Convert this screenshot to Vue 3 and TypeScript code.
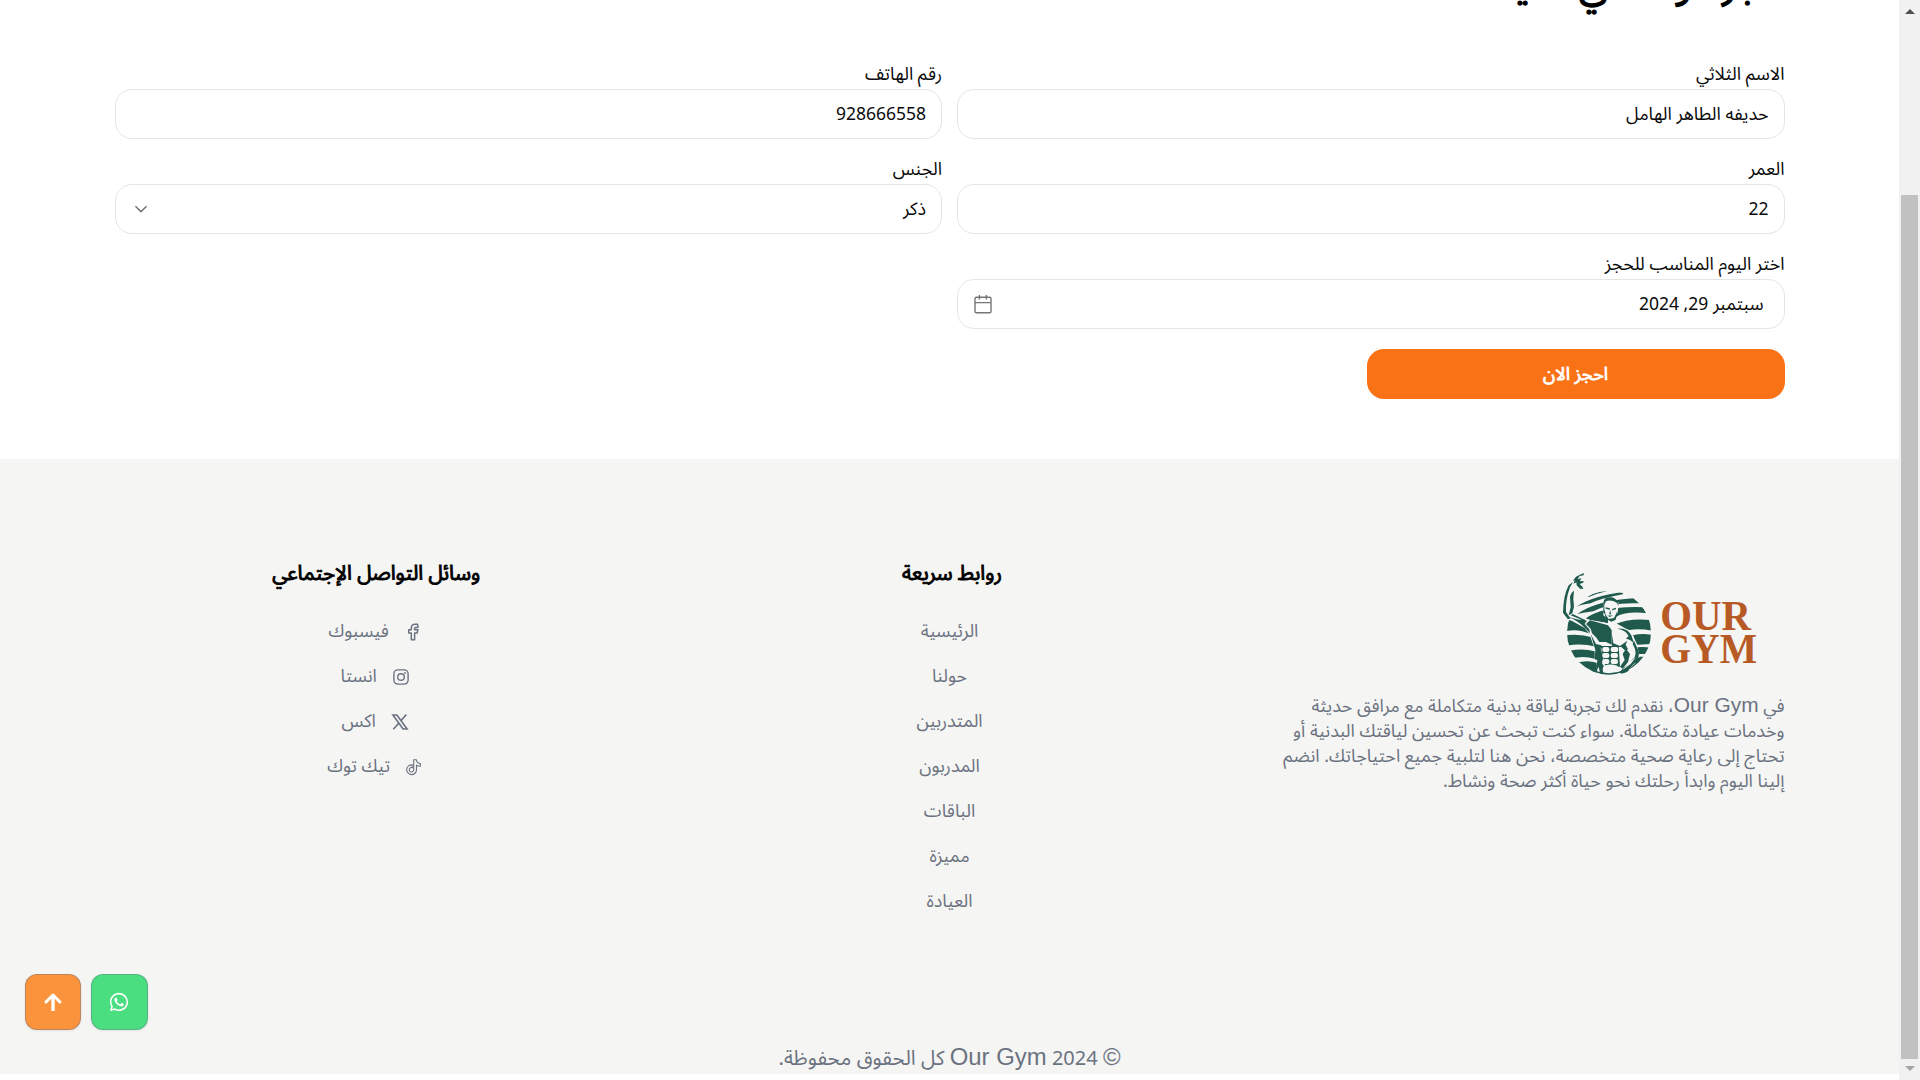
<script setup lang="ts">
interface Social {
  label: string
  icon: 'facebook' | 'instagram' | 'x' | 'tiktok'
}

const links: string[] = ['الرئيسية', 'حولنا', 'المتدربين', 'المدربون', 'الباقات', 'مميزة', 'العيادة']
const socials: Social[] = [
  { label: 'فيسبوك', icon: 'facebook' },
  { label: 'انستا', icon: 'instagram' },
  { label: 'اكس', icon: 'x' },
  { label: 'تيك توك', icon: 'tiktok' },
]
</script>

<template>
  <div class="screen">
    <div class="page" dir="rtl">
      <main class="booking">
        <h1 class="title">حجز موعد في العيادة</h1>
        <form class="form" @submit.prevent>
          <label class="field">
            <span class="label">الاسم الثلاثي</span>
            <span class="control">حديفه الطاهر الهامل</span>
          </label>
          <label class="field">
            <span class="label">رقم الهاتف</span>
            <span class="control"><span class="num">928666558</span></span>
          </label>
          <label class="field">
            <span class="label">العمر</span>
            <span class="control"><span class="num">22</span></span>
          </label>
          <label class="field">
            <span class="label">الجنس</span>
            <span class="control">
              ذكر
              <svg width="20" height="20" viewBox="0 0 20 20" fill="none" stroke="#757575" stroke-width="1.5">
                <path d="M4.400 7.200L10 12.600L15.600 7.200" />
              </svg>
            </span>
          </label>
          <label class="field">
            <span class="label">اختر اليوم المناسب للحجز</span>
            <span class="control date">
              <span>سبتمبر <span class="num">29, 2024</span></span>
              <svg width="20" height="20" viewBox="0 0 20 20" fill="none" stroke="#757575" stroke-width="1.4">
                <rect x="2" y="3.2" width="16" height="15.6" rx="1.4" />
                <path d="M2 8.6h16M6.4 1v4.6M13.4 1v4.6" />
              </svg>
            </span>
          </label>
        </form>
        <button class="submit" type="button">احجز الان</button>
      </main>

      <footer class="footer">
        <div class="columns">
          <section class="about">
            <svg class="logo" width="240" height="140" viewBox="0 0 720 420">
              <defs>
                <clipPath id="disc"><circle cx="207" cy="248" r="126" /></clipPath>
              </defs>
              <g clip-path="url(#disc)" fill="#1f5a4d">
                <path d="M142 140Q170 124 202 123Q172 130 146 141Z" />
                <path d="M108 171Q160 136 252 126L248 133Q180 146 152 160Q124 164 108 171Z" />
                <path d="M112 192Q170 150 292 144L300 160Q210 156 160 184Q134 188 112 192Z" />
                <path d="M136 206Q190 166 316 172L324 190Q262 182 228 200L222 222L204 220L150 210Z" />
                <path d="M222 224Q270 202 340 211V243Q300 234 268 240Q244 232 222 228Z" />
                <path d="M76 212Q110 204 140 236L152 252Q112 234 76 244Z" />
                <path d="M76 256Q120 250 156 262L168 290Q120 278 78 288Z" />
                <path d="M278 256Q310 248 340 256V282L292 284Z" />
                <path d="M88 302Q130 294 164 304V326Q130 316 92 326Z" />
                <path d="M292 292Q315 290 340 294V312H296Z" />
                <path d="M106 340Q140 328 170 338L172 376Q150 360 122 360Z" />
                <path d="M236 366L300 320H330L300 350L240 380Z" />
              </g>
              <path fill="#f5f5f4" d="M190 160Q210 138 236 158L233 190L224 204L226 218L258 236Q282 246 284 274L297 306L286 340L246 374H176L164 296L148 252L134 234L84 206L76 176L90 104L110 82L104 130L98 190L150 210L204 220V208L190 196Z" />
              <g fill="#1f5a4d">
                <path d="M131 69L108 80L98 93L104 90L101 101L109 97L110 106L120 116L130 117L127 110L119 102L129 98L132 94L119 93L125 84L113 88L119 78L131 76Z" />
                <path d="M99 96L86 106Q70 136 69 188L83 207L92 206L78 186Q76 150 90 112Z" />
                <path d="M102 122Q92 128 90 142L92 172L86 196L97 190L102 170Q98 146 102 122Z" />
                <path d="M84 200Q114 212 135 234L150 250L148 238L134 222L140 212L98 192L92 196L126 210Q110 208 84 200Z" />
                <path d="M150 211L204 226L215 240V284L198 276L178 276L168 262L156 250L152 236L138 222Z" />
                <path d="M190 158Q192 140 215 142Q234 146 236 168L230 158Q212 148 198 154L193 164V178L197 192L190 188Z" />
                <path d="M197 172l13 3v4l-13-3zM216 177l12-4v5l-12 3zM211 180l2 13h-6zM202 197l16-1l-8 5zM193 188L206 207L222 204L232 184L233 192L226 210L214 215L198 206Z" />
                <path d="M232 236Q262 232 274 256L282 280Q272 268 258 266L266 258Q258 240 232 236Z" />
                <path d="M215 248L220 280L240 288L262 272L257 284L264 298L256 302L244 291L216 290Z" />
                <path d="M152 252L168 282L184 286L182 296L190 322L186 340L194 352L190 372L180 370L176 350L168 366L172 330L164 328L166 300Z" />
                <path d="M282 272L297 306L294 334Q276 342 264 364Q250 374 236 368L262 344L284 322Q292 306 278 282Z" />
                <path d="M258 296L270 312L264 336L248 356L240 350L254 330L248 312Z" />
                <path d="M182 288H236L240 350L196 350Z" />
              </g>
              <g fill="#f5f5f4">
                <rect x="187" y="291" width="21" height="15" rx="6" /><rect x="212" y="291" width="23" height="15" rx="6" />
                <rect x="187" y="309" width="21" height="15" rx="6" /><rect x="212" y="309" width="22" height="15" rx="6" />
                <rect x="188" y="327" width="20" height="15" rx="6" /><rect x="212" y="327" width="22" height="15" rx="6" />
                <path d="M192 347Q212 340 232 347Q242 360 228 370H192Q184 358 192 347Z" />
                <path d="M268 336L288 322L272 342L248 360Z" />
              </g>
              <path fill="none" stroke="#1f5a4d" stroke-width="4" d="M160 362Q204 382 254 362" />
              <g class="wordmark" fill="#b85a25">
                <text x="361" y="239" textLength="272" lengthAdjust="spacingAndGlyphs">OUR</text>
                <text x="361" y="339" textLength="290" lengthAdjust="spacingAndGlyphs" font-size="124">GYM</text>
              </g>
            </svg>
            <p class="blurb">
              في <span class="latin">Our Gym</span>، نقدم لك تجربة لياقة بدنية متكاملة مع مرافق حديثة<br />
              وخدمات عيادة متكاملة. سواء كنت تبحث عن تحسين لياقتك البدنية أو<br />
              تحتاج إلى رعاية صحية متخصصة، نحن هنا لتلبية جميع احتياجاتك. انضم<br />
              إلينا اليوم وابدأ رحلتك نحو حياة أكثر صحة ونشاط.
            </p>
          </section>
          <nav class="column links">
            <h2>روابط سريعة</h2>
            <a v-for="link in links" :key="link">{{ link }}</a>
          </nav>
          <section class="column">
            <h2>وسائل التواصل الإجتماعي</h2>
            <a v-for="item in socials" :key="item.icon" class="social">
              <svg v-if="item.icon === 'facebook'" width="20" height="20" viewBox="0 0 20 20" fill="none" stroke="currentColor" stroke-width="1.5" stroke-linejoin="round">
                <path d="M14.6 2.2h-2.4C9.800 2.200 8.300 3.700 8.300 6v1.800H5.700v3.300h2.600v6.700h3.300v-6.700h2.500l.8-3.300h-3.300V6.300c0-.5.4-.9.900-.9h2.400z" />
              </svg>
              <svg v-else-if="item.icon === 'instagram'" width="20" height="20" viewBox="0 0 20 20" fill="none" stroke="currentColor" stroke-width="1.4">
                <rect x="2.900" y="2.900" width="14.200" height="14.200" rx="4" />
                <circle cx="10" cy="10" r="3.300" />
                <circle cx="14" cy="6" r=".9" fill="currentColor" stroke="none" />
              </svg>
              <svg v-else-if="item.icon === 'x'" width="20" height="20" viewBox="0 0 20 20" fill="none" stroke="currentColor" stroke-width="1.6">
                <path d="M2.900 3h4l10.200 14h-4zM16.300 2.600l-5.700 6.400M8.800 11l-5.400 6.300" />
              </svg>
              <svg v-else width="20" height="20" viewBox="0 0 20 20" fill="none" stroke="currentColor" stroke-width="1.100" stroke-linejoin="round">
                <path d="M9.700 2.800h2.700c.2 2.200 1.600 3.600 4 3.800v2.700c-1.500 0-2.800-.4-3.900-1.200v4.600a4.900 4.900 0 1 1-4.200-4.800v2.800a2.200 2.200 0 1 0 1.400 2z" />
              </svg>
              <span>{{ item.label }}</span>
            </a>
          </section>
        </div>
        <p class="copyright"><span class="latin">©</span> <span class="num">2024</span> <span class="latin">Our Gym</span> كل الحقوق محفوظة.</p>
      </footer>

      <div class="floating">
        <a class="fab whatsapp">
          <svg width="22" height="22" viewBox="0 0 24 24" fill="#fff">
            <path d="M12.040 2C6.580 2 2.130 6.450 2.130 11.910c0 1.750.46 3.450 1.320 4.950L2.050 22l5.250-1.380a9.900 9.900 0 0 0 4.740 1.210c5.460 0 9.910-4.450 9.910-9.910A9.910 9.910 0 0 0 12.040 2zm0 1.700a8.200 8.200 0 1 1-4.180 15.300l-.3-.18-3.120.82.83-3.040-.2-.31A8.200 8.200 0 0 1 12.040 3.700zM8.530 7.330c-.16 0-.43.060-.66.310-.22.250-.87.860-.87 2.070 0 1.220.89 2.390 1 2.560.14.170 1.760 2.670 4.250 3.730.59.270 1.050.420 1.410.530.59.190 1.130.160 1.560.1.480-.07 1.460-.6 1.670-1.180s.21-1.070.15-1.180c-.07-.1-.23-.16-.48-.27-.25-.14-1.470-.74-1.690-.82-.23-.08-.37-.12-.56.120-.16.250-.64.810-.78.970-.15.170-.29.190-.53.070-.26-.13-1.060-.39-2-1.230-.74-.66-1.230-1.470-1.380-1.720-.12-.24-.01-.39.11-.5.110-.11.270-.29.370-.44.130-.14.170-.25.250-.41.080-.17.040-.31-.02-.43-.06-.11-.56-1.350-.77-1.840-.2-.48-.4-.42-.56-.43z" />
          </svg>
        </a>
        <a class="fab top">
          <svg width="20" height="20" viewBox="0 0 20 20" fill="none" stroke="#fff" stroke-width="3" stroke-linecap="round" stroke-linejoin="round">
            <path d="M10 19V3" stroke-linecap="butt" stroke-width="3.400" /><path d="M3 10L10 3l7 7" />
          </svg>
        </a>
      </div>
    </div>

    <div class="scrollbar">
      <i class="arrow up"></i>
      <i class="thumb"></i>
      <i class="arrow down"></i>
    </div>
  </div>
</template>

<style>
html, body { margin: 0; overflow: hidden; }
</style>

<style scoped>
.screen {
  display: flex;
  width: 1920px;
  height: 1080px;
  overflow: hidden;
  background: #fff;
  color: #0a0a0a;
  font: 17.95px/25px "Noto Sans Arabic", "Noto Sans", sans-serif;
}
.page { position: relative; width: 1899px; height: 1080px; overflow: hidden; }
.booking { height: 459px; padding: 0 114.500px; box-sizing: border-box; overflow: hidden; }
.title {
  height: 48px;
  margin: -38px 0 54px;
  color: #000;
  font-size: 38.4px;
  line-height: 48px;
  font-weight: 400;
  -webkit-text-stroke: 1.3px #000;
}
.form { display: grid; grid-template-columns: 1fr 1fr; gap: 20px 15px; }
.field { display: flex; flex-direction: column; }
.label { height: 27px; margin-top: -2px; white-space: nowrap; }
.num { font-size: .975em; }
.control {
  display: flex;
  align-items: center;
  justify-content: space-between;
  height: 50px;
  padding: 0 15px;
  box-sizing: border-box;
  border: 1px solid #e5e5e5;
  border-radius: 17px;
}
.date { padding: 0 20px 0 15px; }
.submit {
  display: block;
  width: 418px;
  height: 50px;
  margin-top: 20px;
  border: 0;
  border-radius: 17px;
  background: #f97316;
  color: #fff;
  font: 400 17.95px/25px "Noto Sans Arabic", "Noto Sans", sans-serif;
  -webkit-text-stroke: .8px #fff;
}
.footer { height: 615px; padding: 100px 114.500px 0; box-sizing: border-box; background: #f5f5f4; color: #6b7280; }
.columns { display: grid; grid-template-columns: repeat(3, 1fr); gap: 50px; height: 461px; }
.about { display: flex; flex-direction: column; align-items: flex-start; }
.logo { display: block; margin: -9px 5px 0 0; direction: ltr; }
.wordmark { font-family: "Liberation Serif", serif; font-weight: 700; font-size: 129px; }
.blurb { margin: 4px 0 0; white-space: nowrap; }
.latin { font-family: "Liberation Sans", Arial, sans-serif; font-size: 1.165em; line-height: 1; }
.column { display: flex; flex-direction: column; align-items: center; gap: 20px; }
.column h2 {
  height: 30px;
  margin: 0 0 10px;
  color: #000;
  font-size: 20.5px;
  line-height: 30px;
  font-weight: 400;
  -webkit-text-stroke: .9px #000;
}
.links h2 { margin-left: 5px; }
.column a { height: 25px; white-space: nowrap; }
.social { display: flex; align-items: center; gap: 14px; margin-left: -1px; }
.copyright { margin: 24px 0 0; text-align: center; font-size: 20.5px; line-height: 30px; }
.floating { position: absolute; left: 25px; top: 974px; display: flex; gap: 10px; }
.fab {
  display: flex;
  align-items: center;
  justify-content: center;
  width: 57px;
  height: 56px;
  box-sizing: border-box;
  border: 1px solid rgba(100, 116, 139, .4);
  border-radius: 12px;
  box-shadow: 0 1px 3px rgba(0, 0, 0, .08);
}
.whatsapp { padding-right: 1px; background: #4ade80; }
.top { width: 56px; background: #fb923c; }
.scrollbar { display: flex; flex-direction: column; align-items: center; width: 21px; height: 1080px; background: #f1f1f1; }
.arrow { width: 0; height: 0; border: 5px solid transparent; }
.up { margin-top: 4px; border-bottom-color: #505050; }
.thumb { width: 17px; height: 864px; margin-top: 181px; background: #c1c1c1; }
.down { margin-top: 7px; border-top-color: #a3a3a3; }
</style>
